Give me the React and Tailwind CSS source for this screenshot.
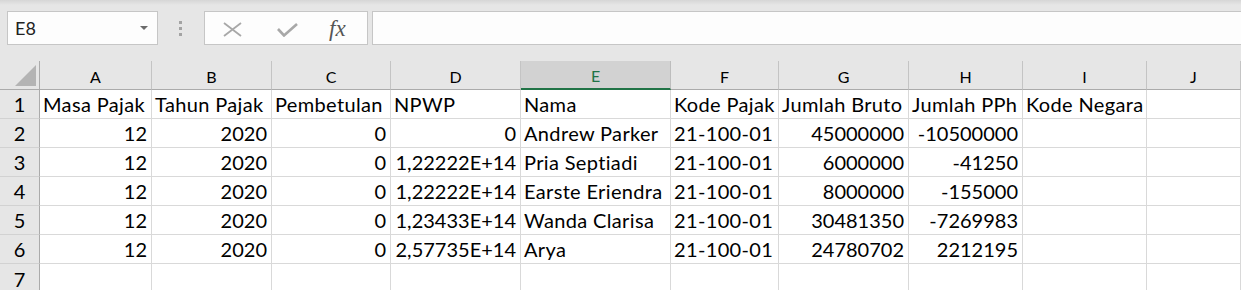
import React from 'react';

const cols = ['A', 'B', 'C', 'D', 'E', 'F', 'G', 'H', 'I', 'J'];

const header = ['Masa Pajak', 'Tahun Pajak', 'Pembetulan', 'NPWP', 'Nama', 'Kode Pajak', 'Jumlah Bruto', 'Jumlah PPh', 'Kode Negara', ''];

const rows = [
  ['12', '2020', '0', '0', 'Andrew Parker', '21-100-01', '45000000', '-10500000'],
  ['12', '2020', '0', '1,22222E+14', 'Pria Septiadi', '21-100-01', '6000000', '-41250'],
  ['12', '2020', '0', '1,22222E+14', 'Earste Eriendra', '21-100-01', '8000000', '-155000'],
  ['12', '2020', '0', '1,23433E+14', 'Wanda Clarisa', '21-100-01', '30481350', '-7269983'],
  ['12', '2020', '0', '2,57735E+14', 'Arya', '21-100-01', '24780702', '2212195'],
];

// columns with text (left aligned) in data rows
const textCols = [4, 5];

function FormulaBar() {
  return (
    <div className="h-[61px] bg-[#e6e6e6]">
      <div className="h-[5px] bg-linear-to-b from-[#d6d6d6] to-[#e6e6e6]" />
      <div className="mt-[6px] flex h-[34px]">
        <div className="ml-[7px] flex w-[151px] items-center justify-between border border-[#c6c6c6] bg-[#fdfdfd] pl-[7px] pr-[9px]">
          <span className="text-[18px] text-[#222]">E8</span>
          <span className="h-0 w-0 border-x-[4px] border-t-[4px] border-x-transparent border-t-[#6b6b6b]" />
        </div>
        <div className="flex w-[46px] flex-col items-center justify-center gap-[3px] pr-[1px]">
          <span className="h-[3px] w-[3px] bg-[#a3a3a3]" />
          <span className="h-[3px] w-[3px] bg-[#a3a3a3]" />
          <span className="h-[3px] w-[3px] bg-[#a3a3a3]" />
        </div>
        <div className="flex w-[164px] items-center border border-[#c6c6c6] bg-[#fdfdfd]">
          <svg className="ml-[18px] mt-[2px]" width="19" height="15" viewBox="0 0 19 15">
            <path d="M1 1 L18 14 M18 1 L1 14" stroke="#a8a8a8" strokeWidth="1.8" fill="none" />
          </svg>
          <svg className="ml-[35px] mt-[3px]" width="21" height="14" viewBox="0 0 21 14">
            <path d="M1 6 L7 12.5 L20 1" stroke="#a8a8a8" strokeWidth="2.6" fill="none" />
          </svg>
          <span className="ml-[31px] font-['Liberation_Serif',serif] text-[23px] italic leading-none text-[#555]">fx</span>
        </div>
        <div className="ml-[4px] flex-1 border-y border-l border-[#c6c6c6] bg-[#fdfdfd]" />
      </div>
    </div>
  );
}

function Sheet() {
  return (
    <div className="grid grid-cols-[40px_112px_120px_119px_130px_150px_108px_130px_114px_124px_1fr] font-['Lato',sans-serif] text-black">
      <div className="relative h-[29px] border-r border-b border-[#ababab] bg-[#e6e6e6]">
        <span className="absolute right-[3px] bottom-[3px] h-0 w-0 border-b-[21px] border-l-[21px] border-b-[#b4b4b4] border-l-transparent" />
      </div>
      {cols.map((c) => (
        <div
          key={c}
          className={
            c === 'E'
              ? 'flex h-[29px] items-center justify-center border-r border-b-2 border-r-[#bdbdbd] border-b-[#217346] bg-[#d2d2d2] pt-[2px] text-[16px] text-[#217346]'
              : 'flex h-[29px] items-center justify-center border-r border-b border-r-[#c4c4c4] border-b-[#ababab] bg-[#e6e6e6] pt-[3px] text-[16px]'
          }
        >
          {c}
        </div>
      ))}

      <div className="flex h-[29px] items-center justify-center border-r border-b border-r-[#ababab] border-b-[#d2d2d2] bg-[#e6e6e6] text-[20px]">1</div>
      {header.map((h, i) => (
        <div key={i} className="flex h-[29px] items-center whitespace-nowrap border-r border-b border-[#d9d9d9] pl-[3px] text-[20px] tracking-[0.35px]">
          {h}
        </div>
      ))}

      {rows.map((r, ri) => (
        <React.Fragment key={ri}>
          <div className="flex h-[29px] items-center justify-center border-r border-b border-r-[#ababab] border-b-[#d2d2d2] bg-[#e6e6e6] text-[20px]">
            {ri + 2}
          </div>
          {cols.map((c, ci) => {
            const v = r[ci] ?? '';
            const left = textCols.includes(ci);
            return (
              <div
                key={c}
                className={
                  left
                    ? 'flex h-[29px] items-center whitespace-nowrap border-r border-b border-[#d9d9d9] pl-[3px] text-[20px] tracking-[0.35px]'
                    : 'flex h-[29px] items-center justify-end whitespace-nowrap border-r border-b border-[#d9d9d9] pr-[4px] text-[20px]'
                }
              >
                {v}
              </div>
            );
          })}
        </React.Fragment>
      ))}

      <div className="flex h-[29px] items-center justify-center border-r border-r-[#ababab] bg-[#e6e6e6] text-[20px]">7</div>
      {cols.map((c) => (
        <div key={c} className="h-[29px] border-r border-[#d9d9d9]" />
      ))}
    </div>
  );
}

export default function App() {
  return (
    <div className="h-[290px] w-[1241px] overflow-hidden bg-white font-['Lato',sans-serif]">
      <FormulaBar />
      <Sheet />
    </div>
  );
}
